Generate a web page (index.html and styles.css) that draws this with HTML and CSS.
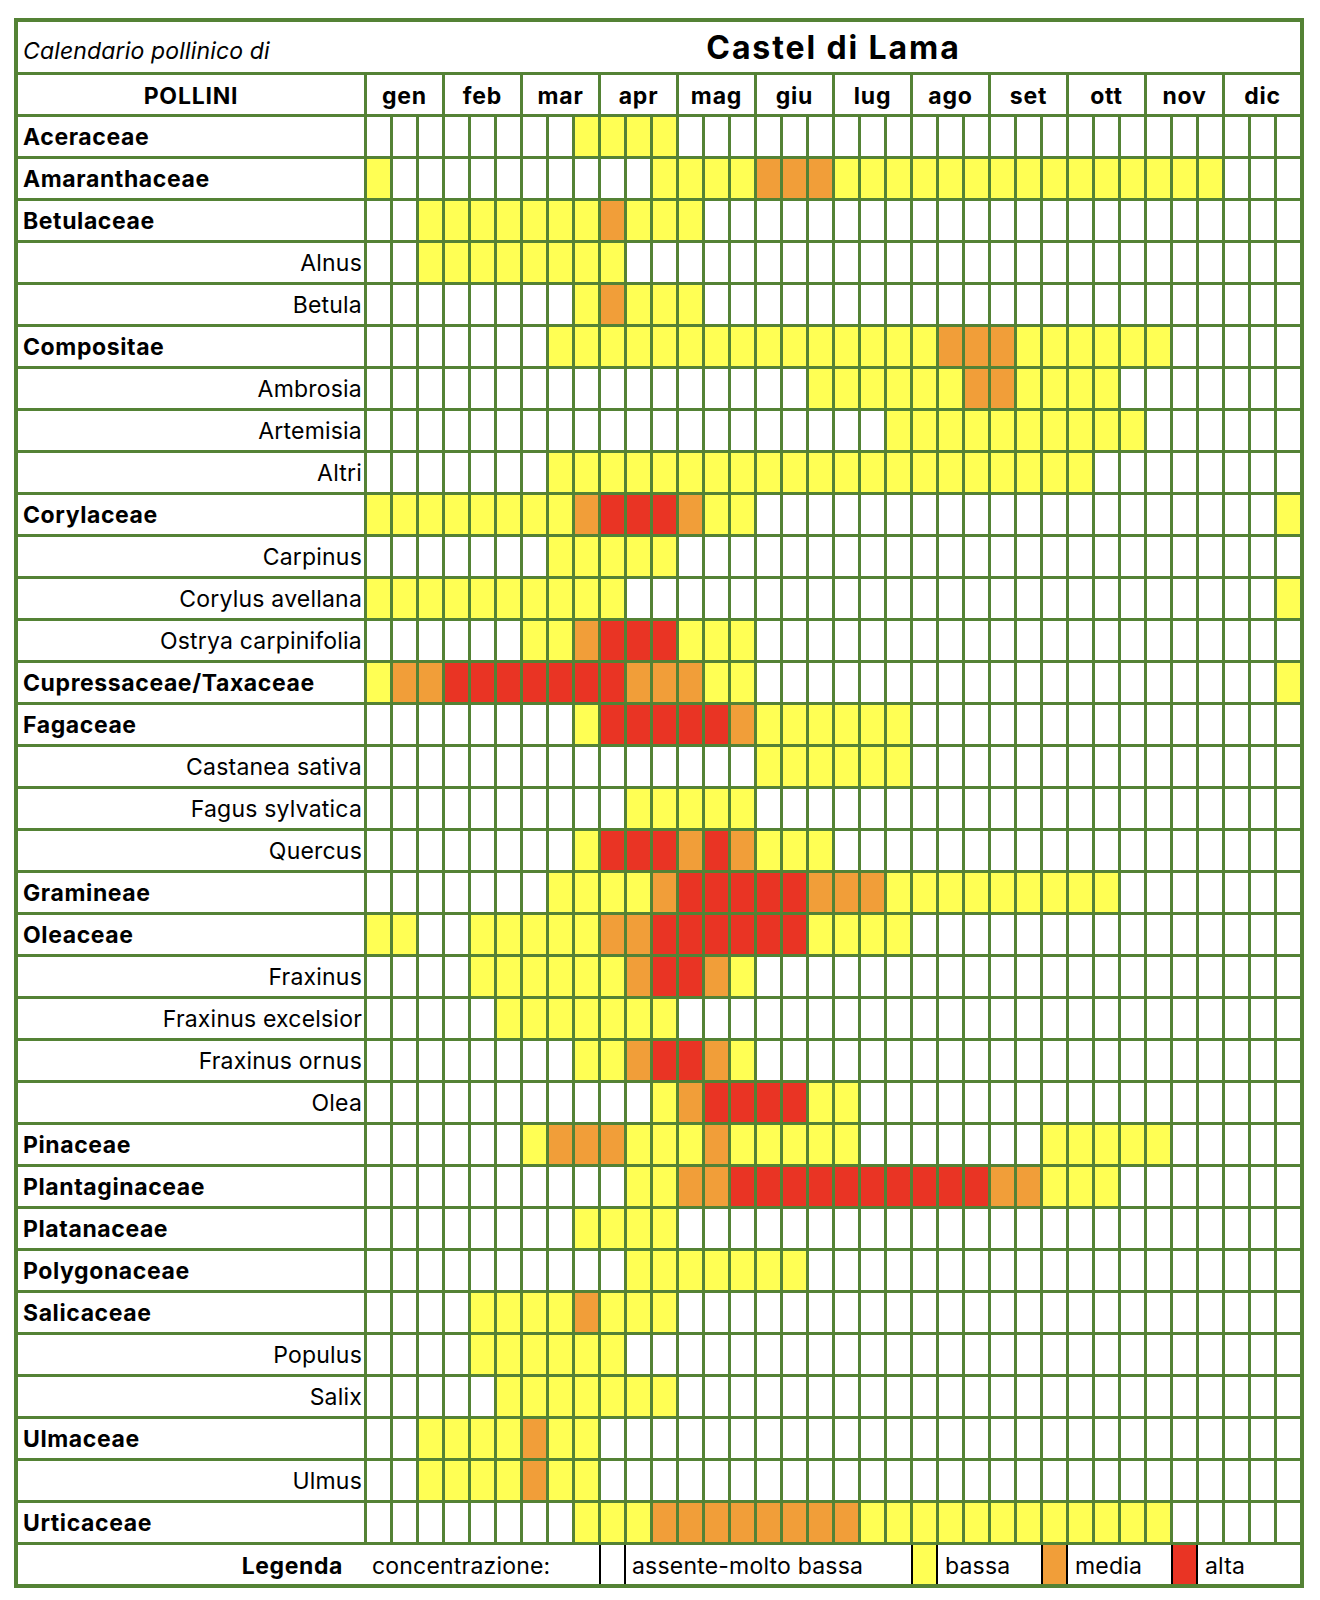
FILE: index.html
```html
<!DOCTYPE html>
<html lang="it">
<head>
<meta charset="utf-8">
<title>Calendario pollinico di Castel di Lama</title>
<link rel="stylesheet" href="styles.css">
</head>
<body>
<div class="sheet">
  <div class="title">
    <span class="sub">Calendario pollinico di</span>
    <span class="city">Castel di Lama</span>
  </div>
  <div class="hlabel">POLLINI</div>
  <div class="month">gen</div>
  <div class="month">feb</div>
  <div class="month">mar</div>
  <div class="month">apr</div>
  <div class="month">mag</div>
  <div class="month">giu</div>
  <div class="month">lug</div>
  <div class="month">ago</div>
  <div class="month">set</div>
  <div class="month">ott</div>
  <div class="month">nov</div>
  <div class="month">dic</div>
  <div id="rows" class="rows"></div>
  <div class="legend">
    <div class="lg-title">Legenda</div>
    <div class="lg-conc">concentrazione:</div>
    <div class="sw sw-none"></div>
    <div class="lg-t1">assente-molto bassa</div>
    <div class="sw sw-y"></div>
    <div class="lg-t2">bassa</div>
    <div class="sw sw-o"></div>
    <div class="lg-t3">media</div>
    <div class="sw sw-r"></div>
    <div class="lg-t4">alta</div>
  </div>
</div>
<script src="script.js"></script>
</body>
</html>
```
FILE: styles.css
```css
html, body {
  margin: 0;
  padding: 0;
  background: #fff;
}
body {
  font-family: Inter, Roboto, "Liberation Sans", sans-serif;
  color: #000;
}
.sheet {
  display: grid;
  grid-template-columns: 346px repeat(36, 23px);
  grid-template-rows: 50px;
  grid-auto-rows: 39px;
  gap: 3px;
  padding: 4px;
  background: #548235;
  width: max-content;
  margin: 18px 0 0 14px;
}
.rows {
  display: contents;
}
.title {
  grid-column: 1 / -1;
  background: #fff;
  display: flex;
  align-items: baseline;
  padding-top: 6px;
}
.sub {
  width: 349px;
  box-sizing: border-box;
  padding-left: 5px;
  font-style: italic;
  font-size: 23px;
  letter-spacing: 0.15px;
}
.city {
  flex: 1;
  text-align: center;
  font-weight: 700;
  font-size: 32px;
  letter-spacing: 1.9px;
}
.hlabel,
.month {
  background: #fff;
  font-weight: 700;
  font-size: 23px;
  letter-spacing: 0.8px;
  display: flex;
  align-items: center;
  justify-content: center;
  padding-top: 2px;
}
.month {
  grid-column: span 3;
}
.lab {
  background: #fff;
  display: flex;
  align-items: center;
  font-size: 23px;
  letter-spacing: 0.2px;
  padding: 1px 2px 0 5px;
  white-space: nowrap;
}
.lab.fam {
  font-weight: 700;
  letter-spacing: 0.6px;
}
.lab.gen {
  justify-content: flex-end;
}
.c {
  background: #fff;
}
.c.y { background: #ffff54; }
.c.o { background: #f19e39; }
.c.r { background: #e93424; }

.legend {
  grid-column: 1 / -1;
  display: grid;
  grid-template-columns: 346px repeat(36, 23px);
  column-gap: 3px;
  background: #fff;
  font-size: 23px;
  letter-spacing: 0.2px;
}
.legend > div {
  display: flex;
  align-items: center;
  white-space: nowrap;
  padding-top: 2px;
}
.lg-title {
  grid-column: 1;
  justify-content: flex-end;
  padding-right: 21px;
  font-weight: 700;
  letter-spacing: 0.6px;
}
.lg-conc { grid-column: 2 / 11; padding-left: 5px; }
.lg-t1 { grid-column: 12 / 23; padding-left: 5px; }
.lg-t2 { grid-column: 24 / 28; padding-left: 6px; }
.lg-t3 { grid-column: 29 / 33; padding-left: 6px; }
.lg-t4 { grid-column: 34 / 38; padding-left: 6px; }
.legend > .sw {
  padding: 0;
  box-shadow: -2px 0 0 #000, 2px 0 0 #000;
}
.sw-none { grid-column: 11; background: #fff; }
.sw-y { grid-column: 23; background: #ffff54; }
.sw-o { grid-column: 28; background: #f19e39; }
.sw-r { grid-column: 33; background: #e93424; }
```
FILE: script.js
```js
var data = [
  ["Aceraceae", 1,          "... ... ..Y YYY ... ... ... ... ... ... ... ..."],
  ["Amaranthaceae", 1,      "Y.. ... ... ..Y YYY OOO YYY YYY YYY YYY YYY ..."],
  ["Betulaceae", 1,         "..Y YYY YYY OYY Y.. ... ... ... ... ... ... ..."],
  ["Alnus", 0,              "..Y YYY YYY Y.. ... ... ... ... ... ... ... ..."],
  ["Betula", 0,             "... ... ..Y OYY Y.. ... ... ... ... ... ... ..."],
  ["Compositae", 1,         "... ... .YY YYY YYY YYY YYY YOO OYY YYY Y.. ..."],
  ["Ambrosia", 0,           "... ... ... ... ... ..Y YYY YYO OYY YY. ... ..."],
  ["Artemisia", 0,          "... ... ... ... ... ... ..Y YYY YYY YYY ... ..."],
  ["Altri", 0,              "... ... .YY YYY YYY YYY YYY YYY YYY Y.. ... ..."],
  ["Corylaceae", 1,         "YYY YYY YYO RRR OYY ... ... ... ... ... ... ..Y"],
  ["Carpinus", 0,           "... ... .YY YYY ... ... ... ... ... ... ... ..."],
  ["Corylus avellana", 0,   "YYY YYY YYY Y.. ... ... ... ... ... ... ... ..Y"],
  ["Ostrya carpinifolia", 0,"... ... YYO RRR YYY ... ... ... ... ... ... ..."],
  ["Cupressaceae/Taxaceae", 1, "YOO RRR RRR ROO OYY ... ... ... ... ... ... ..Y"],
  ["Fagaceae", 1,           "... ... ..Y RRR RRO YYY YYY ... ... ... ... ..."],
  ["Castanea sativa", 0,    "... ... ... ... ... YYY YYY ... ... ... ... ..."],
  ["Fagus sylvatica", 0,    "... ... ... .YY YYY ... ... ... ... ... ... ..."],
  ["Quercus", 0,            "... ... ..Y RRR ORO YYY ... ... ... ... ... ..."],
  ["Gramineae", 1,          "... ... .YY YYO RRR RRO OOY YYY YYY YY. ... ..."],
  ["Oleaceae", 1,           "YY. .YY YYY OOR RRR RRY YYY ... ... ... ... ..."],
  ["Fraxinus", 0,           "... .YY YYY YOR ROY ... ... ... ... ... ... ..."],
  ["Fraxinus excelsior", 0, "... ..Y YYY YYY ... ... ... ... ... ... ... ..."],
  ["Fraxinus ornus", 0,     "... ... ..Y YOR ROY ... ... ... ... ... ... ..."],
  ["Olea", 0,               "... ... ... ..Y ORR RRY Y.. ... ... ... ... ..."],
  ["Pinaceae", 1,           "... ... YOO OYY YOY YYY Y.. ... ..Y YYY Y.. ..."],
  ["Plantaginaceae", 1,     "... ... ... .YY OOR RRR RRR RRR OOY YY. ... ..."],
  ["Platanaceae", 1,        "... ... ..Y YYY ... ... ... ... ... ... ... ..."],
  ["Polygonaceae", 1,       "... ... ... .YY YYY YY. ... ... ... ... ... ..."],
  ["Salicaceae", 1,         "... .YY YYO YYY ... ... ... ... ... ... ... ..."],
  ["Populus", 0,            "... .YY YYY Y.. ... ... ... ... ... ... ... ..."],
  ["Salix", 0,              "... ..Y YYY YYY ... ... ... ... ... ... ... ..."],
  ["Ulmaceae", 1,           "..Y YYY OYY ... ... ... ... ... ... ... ... ..."],
  ["Ulmus", 0,              "..Y YYY OYY ... ... ... ... ... ... ... ... ..."],
  ["Urticaceae", 1,         "... ... ..Y YYO OOO OOO OYY YYY YYY YYY Y.. ..."]
];
var classes = { "Y": "c y", "O": "c o", "R": "c r", ".": "c" };
var rows = document.getElementById("rows");
data.forEach(function (row) {
  var lab = document.createElement("div");
  lab.className = "lab " + (row[1] ? "fam" : "gen");
  lab.textContent = row[0];
  rows.appendChild(lab);
  row[2].replace(/ /g, "").split("").forEach(function (ch) {
    var cell = document.createElement("div");
    cell.className = classes[ch];
    rows.appendChild(cell);
  });
});
```
